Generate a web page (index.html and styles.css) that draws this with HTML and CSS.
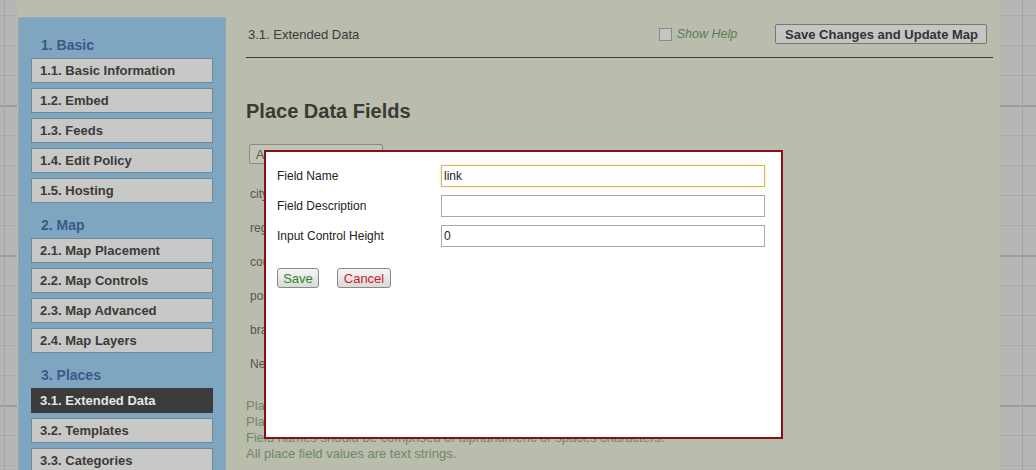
FILE: index.html
```html
<!DOCTYPE html>
<html lang="en">
<head>
    <meta charset="UTF-8">
    <title>Place Data Fields</title>
    <link rel="stylesheet" href="styles.css">
</head>
<body>
    <div class="page">
        <div class="sidebar">
            <div class="nav-group">
                <h3>1. Basic</h3>
                <a class="nav-item">1.1. Basic Information</a>
                <a class="nav-item">1.2. Embed</a>
                <a class="nav-item">1.3. Feeds</a>
                <a class="nav-item">1.4. Edit Policy</a>
                <a class="nav-item">1.5. Hosting</a>
            </div>
            <div class="nav-group">
                <h3>2. Map</h3>
                <a class="nav-item">2.1. Map Placement</a>
                <a class="nav-item">2.2. Map Controls</a>
                <a class="nav-item">2.3. Map Advanced</a>
                <a class="nav-item">2.4. Map Layers</a>
            </div>
            <div class="nav-group">
                <h3>3. Places</h3>
                <a class="nav-item active">3.1. Extended Data</a>
                <a class="nav-item">3.2. Templates</a>
                <a class="nav-item">3.3. Categories</a>
            </div>
        </div>

        <div class="content">
            <div class="header">
                <span class="crumb">3.1. Extended Data</span>
                <label class="show-help"><span class="checkbox"></span>Show Help</label>
                <button class="save-all">Save Changes and Update Map</button>
            </div>

            <h2>Place Data Fields</h2>

            <button class="add-field">Add New Place Field</button>

            <div class="field-list">
                <div class="field-row">city</div>
                <div class="field-row">region</div>
                <div class="field-row">country</div>
                <div class="field-row">postal_code</div>
                <div class="field-row">brand</div>
                <div class="field-row">New field</div>
            </div>

            <div class="notes">
                <p>Place data fields let you store extra values with each place.</p>
                <p>Place data fields are referenced by name using the {field} syntax in the place templates.</p>
                <p>Field names should be comprised of alphanumeric or spaces characters.</p>
                <p>All place field values are text strings.</p>
            </div>
        </div>
    </div>

    <div class="dialog">
        <div class="form-row">
            <label>Field Name</label>
            <input type="text" class="focused" value="link">
        </div>
        <div class="form-row">
            <label>Field Description</label>
            <input type="text" value="">
        </div>
        <div class="form-row">
            <label>Input Control Height</label>
            <input type="text" value="0">
        </div>
        <div class="dialog-buttons">
            <button class="btn-save">Save</button>
            <button class="btn-cancel">Cancel</button>
        </div>
    </div>
</body>
</html>
```

FILE: styles.css
```css
html, body {
    height: 100%;
    overflow: hidden;
}

body {
    margin: 0;
    font-family: 'Liberation Sans', Arial, sans-serif;
    background-color: #b6b6b4;
    background-image:
        linear-gradient(to right, transparent 4px, #a6a6a6 4px, #a6a6a6 5px, transparent 5px, transparent 1022px, #a2a2a2 1022px, #a2a2a2 1023px, transparent 1023px),
        repeating-linear-gradient(to bottom, transparent 0, transparent 105px, #9c9c9c 105px, #9c9c9c 107px, transparent 107px, transparent 150px),
        repeating-linear-gradient(to bottom, transparent 0, transparent 15px, #a9a9a9 15px, #a9a9a9 16px, transparent 16px, transparent 30px);
}

.page {
    display: flex;
    margin-left: 17px;
    width: 983px;
    height: 100%;
    background: #babcae;
}

.sidebar {
    width: 182px;
    margin: 17px 0 0 1px;
    padding: 18px 12px 0;
    background: #7fa6c0;
    border: 1px solid #93a8b4;
    border-bottom: none;
}

.nav-group + .nav-group {
    margin-top: 13px;
}

.nav-group h3 {
    margin: 0 0 4px 10px;
    font-size: 14px;
    line-height: 18px;
    color: #3e578a;
}

.nav-item {
    display: block;
    height: 23px;
    line-height: 23px;
    padding-left: 8px;
    margin-bottom: 5px;
    background: #c8c8c6;
    border: 1px solid #6f8797;
    font-size: 13px;
    font-weight: bold;
    color: #3a3a3a;
}

.nav-item.active {
    background: #3b3b3b;
    border-color: #3b3b3b;
    color: #e6e6e6;
}

.content {
    flex: 1;
    margin-left: 20px;
    margin-right: 7px;
}

.header {
    display: flex;
    align-items: center;
    height: 20px;
    padding: 24px 6px 13px 2px;
    border-bottom: 1px solid #3b3d33;
}

.crumb {
    flex: 1;
    font-size: 13px;
    color: #3a3a3a;
}

.show-help {
    display: flex;
    align-items: center;
    margin-right: 38px;
    font-size: 12.5px;
    font-style: italic;
    color: #5b7c56;
}

.checkbox {
    width: 11px;
    height: 11px;
    margin: 1px 5px 0 0;
    border: 1px solid #8a8a88;
    background: #c4c4c2;
}

.save-all {
    height: 20px;
    padding: 0 8px 0 9px;
    background: #c5c5c3;
    border: 1px solid #77776f;
    border-radius: 2px;
    font-family: inherit;
    font-size: 13px;
    font-weight: bold;
    color: #333;
}

h2 {
    margin: 41px 0 0;
    font-size: 20px;
    line-height: 24px;
    color: #3a3a30;
}

.add-field {
    display: block;
    width: 134px;
    height: 20px;
    margin: 21px 0 0 3px;
    padding: 0;
    background: #c2c4b8;
    border: 1px solid #8a8a82;
    border-radius: 2px;
    font-family: inherit;
    font-size: 13px;
    color: #4a6a4a;
}

.field-list {
    margin-top: 13px;
}

.field-row {
    height: 34px;
    line-height: 34px;
    padding-left: 4px;
    font-size: 12px;
    color: #55554f;
}

.notes {
    margin-top: 17px;
}

.notes p {
    margin: 0;
    font-size: 13px;
    line-height: 16px;
    color: #6a8a64;
}

.dialog {
    position: absolute;
    left: 264px;
    top: 150px;
    width: 504px;
    height: 272px;
    padding: 13px 0 0 11px;
    background: #fff;
    border: 2px solid #8a0e18;
}

.form-row {
    display: flex;
    align-items: center;
    height: 22px;
    margin-bottom: 8px;
}

.form-row label {
    width: 164px;
    font-size: 12px;
    color: #222;
}

.form-row input {
    width: 318px;
    height: 20px;
    padding: 0 2px;
    border: 1px solid #a9a9a9;
    font-family: inherit;
    font-size: 12px;
    color: #222;
    outline: none;
}

.form-row input.focused {
    border-color: #dcb565;
    box-shadow: 0 0 3px #f4dca0;
}

.dialog-buttons {
    display: flex;
    gap: 18px;
    margin-top: 21px;
}

.dialog-buttons button {
    height: 20px;
    padding: 0;
    background: linear-gradient(#f6f6f6, #d9d9d9);
    border: 1px solid #8a8a8a;
    border-radius: 3px;
    font-family: inherit;
    font-size: 13px;
}

.btn-save {
    width: 42px;
    color: #2a8a2a;
}

.btn-cancel {
    width: 54px;
    color: #d0182a;
}
```
